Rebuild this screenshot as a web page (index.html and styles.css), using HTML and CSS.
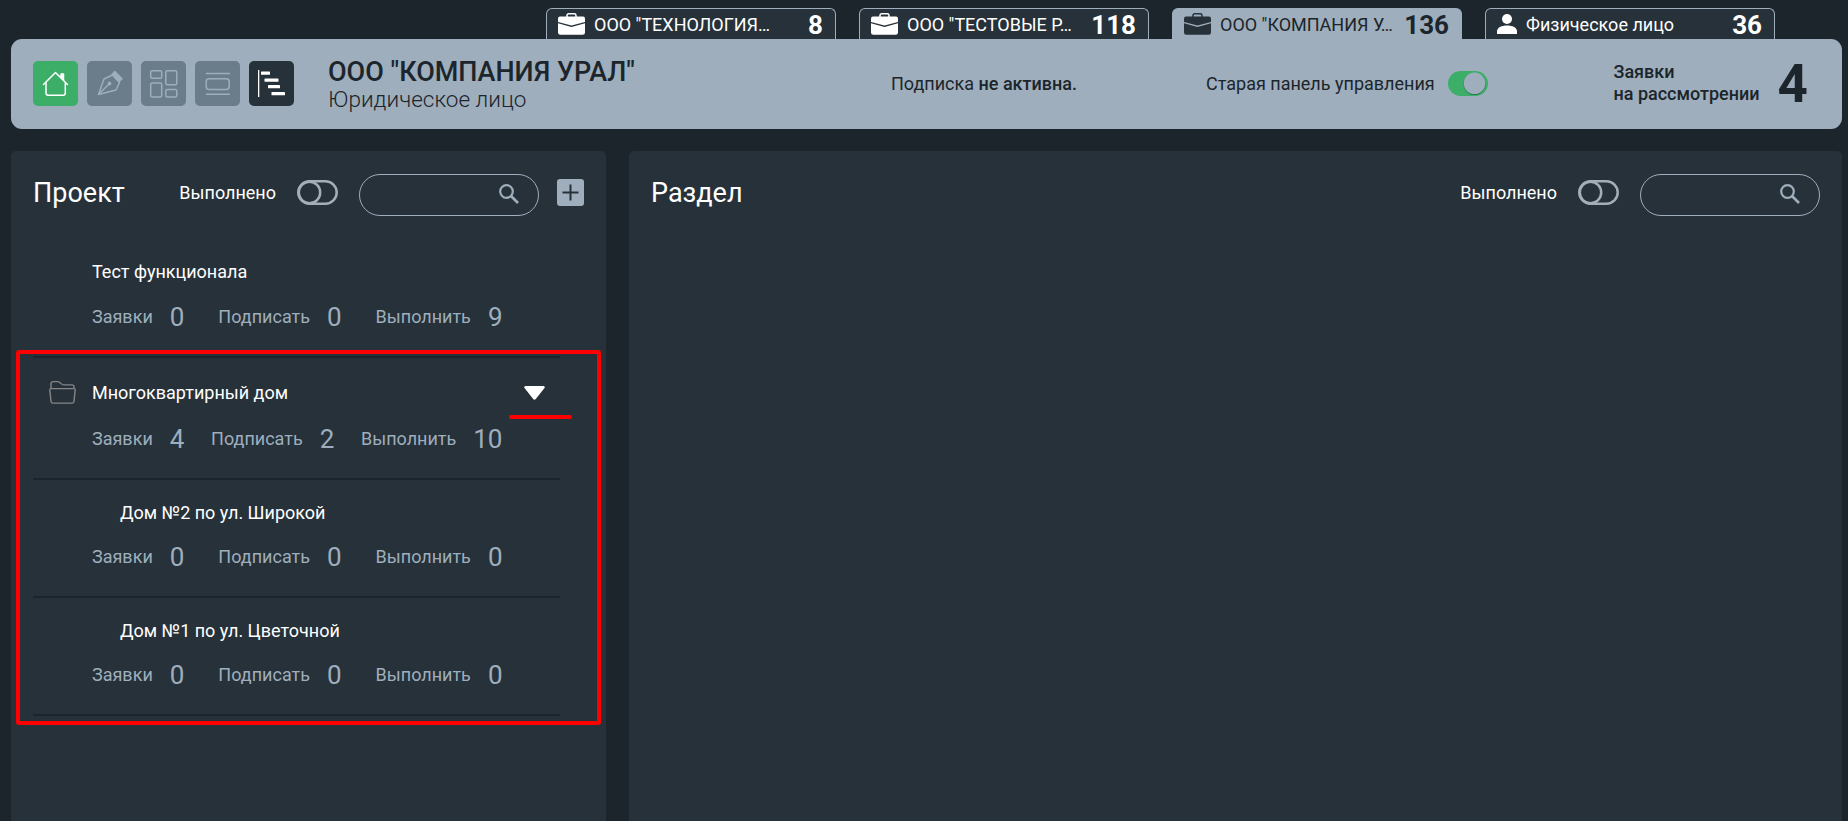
FILE: index.html
```
<!DOCTYPE html>
<html lang="ru">
<head>
<meta charset="utf-8">
<title>Проекты</title>
<link rel="stylesheet" href="styles.css">
</head>
<body>
<svg class="defs" width="0" height="0">
  <symbol id="case" viewBox="0 0 27 22">
    <path d="M9 4V2.5Q9 .8 10.7 .8h5.6Q18 .8 18 2.5V4" fill="none" stroke="currentColor" stroke-width="1.5"/>
    <path d="M2 3.6h23q2 0 2 2V9l-13.5 3.6L0 9V5.600q0-2 2-2z" fill="currentColor"/>
    <path d="M0 10.300l13.500 3.600L27 10.300V19.500q0 2.300-2.300 2.300H2.300Q0 21.800 0 19.500z" fill="currentColor"/>
  </symbol>
  <symbol id="search" viewBox="0 0 20 20">
    <circle cx="7.500" cy="7.500" r="6.300" fill="none" stroke="currentColor" stroke-width="2.200"/>
    <path d="M12 12l7 7" stroke="currentColor" stroke-width="2.600"/>
  </symbol>
  <symbol id="switch" viewBox="0 0 41 25">
    <rect x="1.300" y="1.300" width="38.400" height="22.400" rx="11.200" fill="none" stroke="currentColor" stroke-width="2.500"/>
    <circle cx="12.500" cy="12.500" r="10.700" fill="none" stroke="currentColor" stroke-width="2.500"/>
  </symbol>
</svg>

<nav class="tabs">
  <div class="tab"><svg class="tab-case"><use href="#case"/></svg><span class="tab-name">ООО "ТЕХНОЛОГИЯ…</span><b class="tab-count">8</b></div>
  <div class="tab"><svg class="tab-case"><use href="#case"/></svg><span class="tab-name">ООО "ТЕСТОВЫЕ Р…</span><b class="tab-count">118</b></div>
  <div class="tab tab-active"><svg class="tab-case"><use href="#case"/></svg><span class="tab-name">ООО "КОМПАНИЯ У…</span><b class="tab-count">136</b></div>
  <div class="tab"><svg class="tab-user" viewBox="0 0 20 20"><circle cx="10" cy="5" r="5" fill="currentColor"/><path d="M0 20v-2.500C0 13.500 4.500 11.500 10 11.500s10 2 10 6V20z" fill="currentColor"/></svg><span class="tab-name">Физическое лицо</span><b class="tab-count">36</b></div>
</nav>

<header class="topbar">
  <div class="tools">
    <div class="tool tool-home"><svg viewBox="0 0 45 45" fill="none" stroke="currentColor" stroke-width="1.500" stroke-linejoin="round" stroke-linecap="round"><path d="M10.500 23.500L22.500 11.500 34.500 23.500M13 21.500V32q0 2.200 2.200 2.200h15Q32.300 34.200 32.300 32V21.500"/><path d="M28 16.500V13h2.500v6" fill="currentColor"/></svg></div>
    <div class="tool"><svg viewBox="0 0 45 45" fill="none" stroke="currentColor" stroke-width="1.500" stroke-linejoin="round"><path d="M11.500 33.500L17 18l8.500-4 7 7.500-3.500 7.500z"/><path d="M11.500 33.500l10-10"/><circle cx="22.500" cy="22.500" r="1.200" fill="currentColor"/><path d="M25 13.500l2.800-3L35 17.800l-3 3z" fill="currentColor"/></svg></div>
    <div class="tool"><svg viewBox="0 0 45 45" fill="none" stroke="currentColor" stroke-width="1.500"><rect x="9.700" y="9.700" width="11" height="7.500" rx="1.500"/><rect x="9.700" y="22" width="11" height="14" rx="1.500"/><rect x="24.800" y="9.700" width="11" height="14" rx="1.500"/><rect x="24.800" y="28.500" width="11" height="7.500" rx="1.500"/></svg></div>
    <div class="tool"><svg viewBox="0 0 45 45" fill="none" stroke="currentColor" stroke-width="1.500" stroke-linecap="round"><path d="M11.500 12.500h23M11.500 33.300h23"/><rect x="11.200" y="17.800" width="23" height="10.800" rx="3"/></svg></div>
    <div class="tool tool-chart"><svg viewBox="0 0 45 45" fill="currentColor"><rect x="9" y="9" width="1.300" height="27"/><rect x="12" y="10.500" width="9" height="3.300" rx=".6"/><rect x="15.500" y="17.500" width="14" height="3.300" rx=".6"/><rect x="19" y="24" width="12" height="3.300" rx=".6"/><rect x="22.500" y="31" width="13.500" height="3.300" rx=".6"/></svg></div>
  </div>
  <div class="company">
    <div class="company-name">ООО "КОМПАНИЯ УРАЛ"</div>
    <div class="company-kind">Юридическое лицо</div>
  </div>
  <div class="subscription">Подписка <b>не активна.</b></div>
  <div class="legacy"><span>Старая панель управления</span>
    <svg class="toggle-on" viewBox="0 0 40 25"><rect width="40" height="25" rx="12.500" fill="#3cae68"/><circle cx="26.500" cy="13" r="11" fill="#25754a"/><circle cx="26.500" cy="12.300" r="10.800" fill="#9eaebc"/></svg>
  </div>
  <div class="requests"><div class="requests-label">Заявки<br>на рассмотрении</div><span class="requests-count">4</span></div>
</header>

<main class="panels">
  <section class="panel projects">
    <div class="panel-head">
      <h2>Проект</h2>
      <span class="done">Выполнено</span>
      <svg class="toggle"><use href="#switch"/></svg>
      <div class="search"><svg><use href="#search"/></svg></div>
      <div class="add"><svg viewBox="0 0 27 27"><path d="M5.500 13.500h16M13.500 5.500v16" stroke="#27313a" stroke-width="2"/></svg></div>
    </div>
    <div class="list">
      <article class="row row-first">
        <div class="row-title">Тест функционала</div>
        <div class="stats"><span class="stat">Заявки <i>0</i></span><span class="stat">Подписать <i>0</i></span><span class="stat">Выполнить <i>9</i></span></div>
      </article>
      <article class="row row-folder">
        <div class="row-title">
          <svg class="folder" viewBox="0 0 27 26" fill="none" stroke="currentColor" stroke-width="1.400" stroke-linejoin="round" preserveAspectRatio="none"><path d="M2 8.500V3Q2 .8 4.200 .8h4.600q1 0 1.700 .7l2.500 2.300q.7.600 1.600.600h8.200Q25 4.400 25 6.600v1.900"/><path d="M2.500 8.500h22q1.800 0 1.700 1.800L25 23q-.2 2-2.200 2H4.200q-2 0-2.200-2L.8 10.300Q.7 8.500 2.500 8.500z"/></svg>
          Многоквартирный дом
          <svg class="caret" viewBox="0 0 21 14"><path d="M1.500 0h18q2 .5 1 2L11.800 13q-1.300 1.300-2.600 0L.5 2q-1-1.500 1-2z" fill="#fff"/></svg>
        </div>
        <div class="stats"><span class="stat">Заявки <i>4</i></span><span class="stat">Подписать <i>2</i></span><span class="stat">Выполнить <i>10</i></span></div>
      </article>
      <article class="row row-child">
        <div class="row-title">Дом №2 по ул. Широкой</div>
        <div class="stats"><span class="stat">Заявки <i>0</i></span><span class="stat">Подписать <i>0</i></span><span class="stat">Выполнить <i>0</i></span></div>
      </article>
      <article class="row row-child">
        <div class="row-title">Дом №1 по ул. Цветочной</div>
        <div class="stats"><span class="stat">Заявки <i>0</i></span><span class="stat">Подписать <i>0</i></span><span class="stat">Выполнить <i>0</i></span></div>
      </article>
    </div>
    <div class="mark-box"></div>
    <div class="mark-line"></div>
  </section>
  <section class="panel sections">
    <div class="panel-head">
      <h2>Раздел</h2>
      <span class="done">Выполнено</span>
      <svg class="toggle"><use href="#switch"/></svg>
      <div class="search"><svg><use href="#search"/></svg></div>
    </div>
  </section>
</main>
</body>
</html>
```
FILE: styles.css
```
* { box-sizing: border-box; }
body {
  margin: 0;
  height: 821px;
  overflow: hidden;
  display: flex;
  flex-direction: column;
  background: #1b252b;
  color: #fff;
  font: 400 18px Roboto, "Liberation Sans", sans-serif;
}
svg { display: block; flex: none; }
.defs { position: absolute; }

.tabs {
  display: flex;
  gap: 23px;
  height: 39px;
  padding: 8px 0 0 546px;
}
.tab {
  display: flex;
  align-items: center;
  width: 290px;
  height: 31px;
  padding: 0 12px;
  border: 1px solid #9eaebc;
  border-bottom: 0;
  border-radius: 6px 6px 0 0;
  background: #27313a;
  line-height: 26px;
  white-space: nowrap;
}
.tab-active { background: #9eaebc; color: #1b252b; }
.tab-case { width: 27px; height: 22px; margin: 0 9px 0 -1px; }
.tab-active .tab-case { color: #27313a; }
.tab-user { width: 20px; height: 20px; margin: 0 9px 0 -1px; }
.tab-name { flex: 1; padding-top: 2px; }
.tab-count { font-size: 26px; font-weight: 700; padding-top: 2px; }

.topbar {
  display: flex;
  align-items: center;
  flex: none;
  height: 90px;
  margin: 0 6px 0 11px;
  padding: 0 34px 0 22px;
  border-radius: 11px;
  background: #9eaebc;
  color: #1b252b;
  white-space: nowrap;
}
.tools { display: flex; gap: 9px; padding-bottom: 1px; }
.tool { width: 45px; height: 45px; border-radius: 5px; background: #6b7c8a; color: #9eaebc; }
.tool-home { background: #3cae68; color: #fff; }
.tool-chart { background: #27313a; color: #fff; }
.company { width: 563px; margin-left: 34px; }
.company-name { font-size: 27px; font-weight: 500; line-height: 30px; padding-top: 1px; margin-bottom: -1px; }
.company-kind { font-size: 22.500px; font-weight: 300; line-height: 27px; }
.subscription { width: 315px; padding-bottom: 2px; }
.subscription b { font-weight: 500; }
.legacy { display: flex; align-items: center; gap: 13px; }
.legacy span { padding-bottom: 2px; }
.toggle-on { width: 40px; height: 25px; margin-bottom: 1px; }
.requests {
  display: flex;
  align-items: center;
  gap: 18px;
  margin-left: auto;
  font-weight: 500;
  line-height: 22px;
}
.requests-label { padding-bottom: 2px; }
.requests-count { font-size: 53px; font-weight: 700; line-height: 60px; }

.panels { display: flex; gap: 23px; flex: 1; padding: 22px 6px 0 11px; }
.panel { position: relative; border-radius: 5px 5px 0 0; background: #27313a; }
.projects { width: 595px; flex: none; }
.sections { flex: 1; }
.panel-head { display: flex; align-items: center; height: 83px; padding: 0 22px; }
h2 { margin: 0; flex: 1; font-size: 27px; font-weight: 400; line-height: 30px; }
.done { margin-right: 21px; }
.toggle { width: 41px; height: 25px; color: #a3afb8; }
.search {
  display: flex;
  align-items: center;
  justify-content: flex-end;
  width: 180px;
  height: 42px;
  margin: 5px 0 0 21px;
  padding: 0 19px 2px 0;
  border: 1px solid #9eaebc;
  border-radius: 21px;
  color: #9eaebc;
}
.search svg { width: 20px; height: 20px; }
.add { width: 27px; height: 27px; margin-left: 18px; border-radius: 3px; background: #9eaebc; }

.list { width: 527px; margin-left: 22px; }
.row { padding: 20px 57.500px 23px 59px; border-bottom: 2px solid #1b252b; }
.row-title { display: flex; align-items: center; height: 24px; margin-bottom: 17px; }
.row-first { padding-top: 25px; }
.row-first .row-title { margin-bottom: 18px; }
.row-folder { padding-top: 22px; }
.row-folder .row-title { margin: 0 -42px 19px -43px; }
.row-child .row-title { padding-left: 28px; }
.folder { width: 27px; height: 23px; margin-right: 16px; color: #858585; }
.caret { width: 21px; height: 14px; margin: 1px 0 0 auto; }
.stats { display: flex; justify-content: space-between; height: 32px; color: #9eaebc; }
.stat { display: flex; gap: 17px; line-height: 32px; }
.stat i { font-size: 26px; font-style: normal; }

.mark-box {
  position: absolute;
  left: 5px;
  top: 199px;
  width: 585px;
  height: 375px;
  border: 4px solid #f00;
  border-radius: 3px;
}
.mark-line {
  position: absolute;
  left: 498px;
  top: 264px;
  width: 63px;
  height: 4px;
  border-radius: 2px;
  background: #f00;
}
```
